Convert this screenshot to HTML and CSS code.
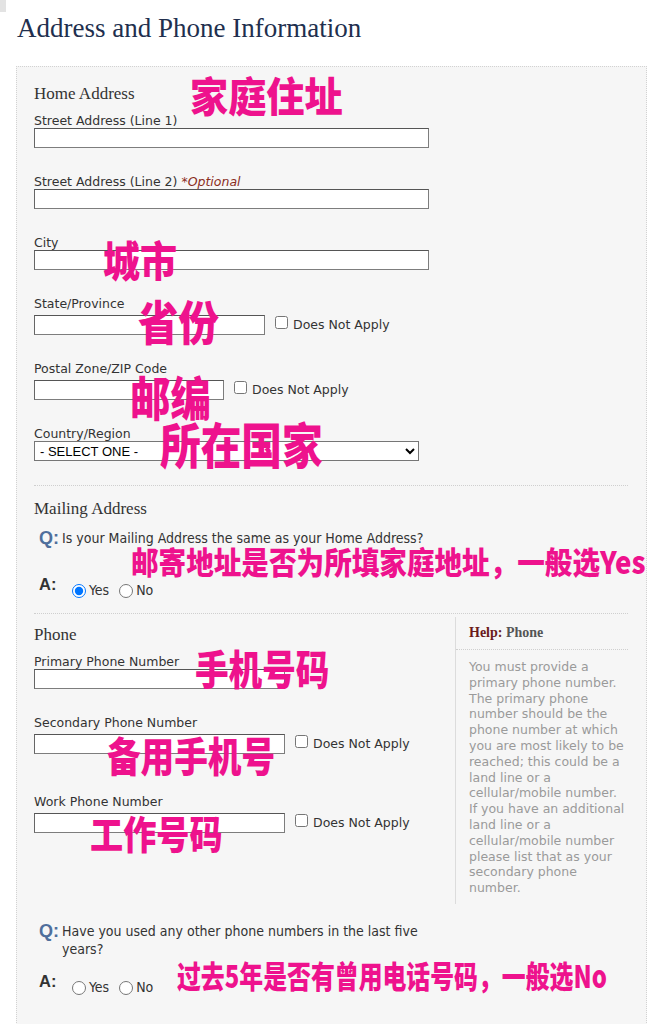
FILE: index.html
```html
<!DOCTYPE html>
<html lang="en">
<head>
<meta charset="utf-8">
<title>Address and Phone Information</title>
<link rel="stylesheet" href="styles.css">
</head>
<body>
<div class="page">
  <div class="corner"></div>
  <h1 class="title">Address and Phone Information</h1>

  <div class="panel">
    <h2 class="sec-title">Home Address</h2>

    <div class="field first">
      <label class="lbl">Street Address (Line 1)</label>
      <input class="txt w-long" type="text">
    </div>

    <div class="field">
      <label class="lbl">Street Address (Line 2) <span class="opt">*Optional</span></label>
      <input class="txt w-long" type="text">
    </div>

    <div class="field">
      <label class="lbl">City</label>
      <input class="txt w-long" type="text">
    </div>

    <div class="field">
      <label class="lbl">State/Province</label>
      <div class="row">
        <input class="txt w-state" type="text">
        <input class="chk" type="checkbox">
        <span class="dna">Does Not Apply</span>
      </div>
    </div>

    <div class="field">
      <label class="lbl">Postal Zone/ZIP Code</label>
      <div class="row">
        <input class="txt w-zip" type="text">
        <input class="chk" type="checkbox">
        <span class="dna">Does Not Apply</span>
      </div>
    </div>

    <div class="field">
      <label class="lbl">Country/Region</label>
      <select class="sel">
        <option>- SELECT ONE -</option>
      </select>
    </div>

    <div class="sep sep-1"></div>

    <h2 class="sec-title mail">Mailing Address</h2>
    <div class="qa-q">
      <span class="qmark">Q:</span>
      <span class="qtext">Is your Mailing Address the same as your Home Address?</span>
    </div>
    <div class="qa-a">
      <span class="amark">A:</span>
      <input class="radio" type="radio" name="mail" checked>
      <span class="rlabel">Yes</span>
      <input class="radio" type="radio" name="mail">
      <span class="rlabel">No</span>
    </div>

    <div class="sep sep-2"></div>

    <div class="phone">
      <div class="phone-left">
        <h2 class="sec-title ph">Phone</h2>
        <div class="field first-ph">
          <label class="lbl">Primary Phone Number</label>
          <input class="txt w-phone" type="text">
        </div>
        <div class="field sec-ph">
          <label class="lbl">Secondary Phone Number</label>
          <div class="row">
            <input class="txt w-phone" type="text">
            <input class="chk" type="checkbox">
            <span class="dna">Does Not Apply</span>
          </div>
        </div>
        <div class="field work-ph">
          <label class="lbl">Work Phone Number</label>
          <div class="row">
            <input class="txt w-phone" type="text">
            <input class="chk" type="checkbox">
            <span class="dna">Does Not Apply</span>
          </div>
        </div>
      </div>
      <aside class="help">
        <h3 class="help-title"><span class="h">Help:</span> <span class="p">Phone</span></h3>
        <p class="help-text">You must provide a<br>primary phone number.<br>The primary phone<br>number should be the<br>phone number at which<br>you are most likely to be<br>reached; this could be a<br>land line or a<br>cellular/mobile number.<br>If you have an additional<br>land line or a<br>cellular/mobile number<br>please list that as your<br>secondary phone<br>number.</p>
      </aside>
    </div>

    <div class="qa-q q2">
      <span class="qmark">Q:</span>
      <span class="qtext">Have you used any other phone numbers in the last five<br>years?</span>
    </div>
    <div class="qa-a a2">
      <span class="amark">A:</span>
      <input class="radio" type="radio" name="other">
      <span class="rlabel">Yes</span>
      <input class="radio" type="radio" name="other">
      <span class="rlabel">No</span>
    </div>
  </div>

  <span class="note n1">家庭住址</span>
  <span class="note n2">城市</span>
  <span class="note n3">省份</span>
  <span class="note n4">邮编</span>
  <span class="note n5">所在国家</span>
  <span class="note n6">邮寄地址是否为所填家庭地址，一般选Yes</span>
  <span class="note n7">手机号码</span>
  <span class="note n8">备用手机号</span>
  <span class="note n9">工作号码</span>
  <span class="note n10">过去5年是否有曾用电话号码，一般选No</span>
</div>
</body>
</html>
```

FILE: styles.css
```css
* { box-sizing: border-box; }

html, body {
  margin: 0;
  padding: 0;
  background: #fff;
}

body {
  font-family: "DejaVu Sans", Verdana, sans-serif;
  color: #333;
}

.page {
  position: relative;
  width: 669px;
  height: 1024px;
  overflow: hidden;
}

.corner {
  position: absolute;
  left: 0;
  top: 0;
  width: 6px;
  height: 12px;
  background: #e3e3e3;
}

.title {
  margin: 12px 0 0 17px;
  font: normal 27px/32px "Liberation Serif", "Times New Roman", serif;
  color: #212f4e;
}

.panel {
  margin: 22px 0 0 16px;
  width: 631px;
  background: #f6f6f6;
  border: 1px dotted #d2d2d2;
  padding: 17px 18px 80px 17px;
}

.sec-title {
  margin: 0;
  font: normal 17px/20px "Liberation Serif", "Times New Roman", serif;
  color: #333;
}

.field { margin-top: 27px; }
.field.first { margin-top: 10px; }

.lbl {
  display: block;
  font-size: 12.5px;
  line-height: 13px;
  color: #333;
  margin-bottom: 1px;
  white-space: nowrap;
}

.opt {
  color: #8a2d1d;
  font-style: italic;
}

.txt {
  display: block;
  height: 20px;
  margin: 0;
  padding: 0 3px;
  border: 1px solid #7d7d7d;
  border-top-color: #555;
  border-left-color: #666;
  background: #fff;
  border-radius: 0;
}

.w-long { width: 395px; }
.w-state { width: 231px; }
.w-zip { width: 190px; }
.w-phone { width: 251px; }

.row {
  display: flex;
  align-items: flex-start;
  margin-top: 5px;
}

.chk {
  width: 13px;
  height: 13px;
  margin: 1px 0 0 10px;
}

.dna {
  margin: 2px 0 0 5px;
  font-size: 12.5px;
  line-height: 15px;
  color: #333;
  white-space: nowrap;
}

.sel {
  display: block;
  width: 385px;
  height: 20px;
  min-height: 20px;
  margin-top: 1px;
  padding: 0 0 0 1px;
  font: 13px/18px "Liberation Sans", Arial, sans-serif;
  color: #000;
  background: #fff;
  border: 1px solid #767676;
  border-radius: 0;
}

.sep { border-top: 1px dotted #cfcfcf; }
.sep-1 { margin-top: 24px; }
.sep-2 { margin-top: 14px; }

.sec-title.mail { margin-top: 13px; }

.qa-q {
  display: flex;
  align-items: flex-start;
  margin: 10px 0 0 5px;
}

.qmark {
  flex: none;
  width: 23px;
  font: bold 18px/18px "Liberation Sans", Arial, sans-serif;
  color: #4f6f9c;
}

.qtext,
.rlabel {
  font-family: "DejaVu Sans Condensed", "DejaVu Sans", sans-serif;
  font-stretch: condensed;
  font-size: 14px;
  line-height: 18px;
  color: #333;
}

.qa-a {
  display: flex;
  align-items: flex-start;
  margin: 28px 0 0 5px;
}

.amark {
  flex: none;
  width: 33px;
  font: bold 16.5px/18px "Liberation Sans", Arial, sans-serif;
  color: #333;
}

.radio {
  width: 14px;
  height: 14px;
  margin: 9px 0 0 0;
}

.rlabel {
  margin: 6px 0 0 3px;
}

.rlabel + .radio { margin-left: 10px; }

.phone {
  display: grid;
  grid-template-columns: 421px 1fr;
}

.sec-title.ph { margin-top: 11px; }
.field.first-ph { margin-top: 10px; }
.field.sec-ph { margin-top: 27px; }
.field.work-ph { margin-top: 41px; }

.help {
  margin-top: 3px;
  height: 287px;
  border-left: 1px solid #dcdcdc;
}

.help-title {
  margin: 0;
  padding: 6px 0 6px 13px;
  font: bold 14px/20px "Liberation Serif", "Times New Roman", serif;
  border-bottom: 1px dotted #cfcfcf;
}

.help-title .h { color: #6b1b1b; }
.help-title .p { color: #555; }

.help-text {
  margin: 0;
  padding: 9px 0 0 13px;
  font-size: 12.5px;
  line-height: 15.8px;
  color: #9a9a9a;
  white-space: nowrap;
}

.qa-q.q2 { margin-top: 18px; }
.qa-a.a2 { margin-top: 14px; }

/* pink annotations laid over the form */
.note {
  position: absolute;
  font-family: "Noto Sans CJK SC", "Noto Sans", sans-serif;
  font-weight: 900;
  line-height: 1;
  color: #ee128d;
  white-space: nowrap;
  transform-origin: 0 0;
}

.n1 { left: 190px; top: 74px; font-size: 41px; transform: scaleX(0.93); }
.n2 { left: 103px; top: 238px; font-size: 42px; transform: scaleX(0.88); }
.n3 { left: 138px; top: 296px; font-size: 47px; transform: scaleX(0.86); }
.n4 { left: 130px; top: 372px; font-size: 47px; transform: scaleX(0.86); }
.n5 { left: 160px; top: 418px; font-size: 49px; transform: scaleX(0.83); }
.n6 { left: 131px; top: 545px; font-size: 31px; transform: scaleX(0.89); }
.n7 { left: 195px; top: 647px; font-size: 41px; transform: scaleX(0.82); }
.n8 { left: 107px; top: 734px; font-size: 41px; transform: scaleX(0.82); }
.n9 { left: 90px; top: 813px; font-size: 39px; transform: scaleX(0.85); }
.n10 { left: 177px; top: 959px; font-size: 31px; transform: scaleX(0.77); }
```
